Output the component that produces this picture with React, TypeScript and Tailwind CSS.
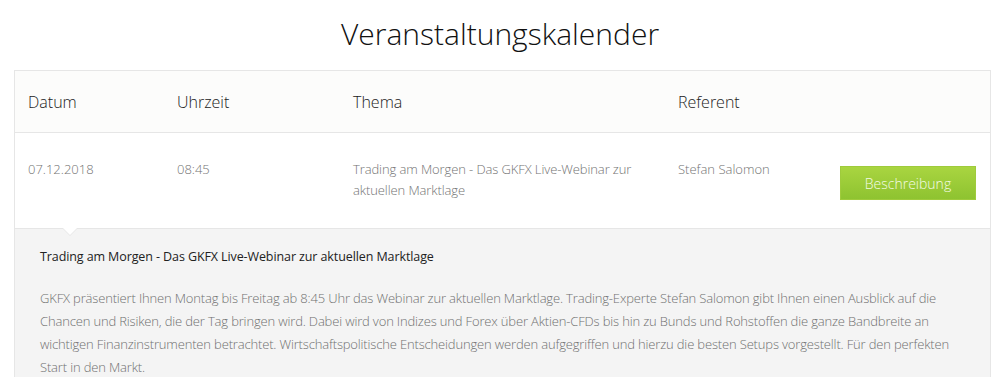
export default function App() {
  return (
    <div className="w-[1000px] h-[377px] overflow-hidden bg-white" style={{ fontFamily: '"Open Sans", "Noto Sans", sans-serif' }}>
      <h1 className="pt-[14px] h-[70px] text-center text-[30px] leading-[40px] font-light text-[#111]">Veranstaltungskalender</h1>
      <div className="mx-[14px] w-[977px] border border-[#e6e6e6] border-b-0">
        <div className="flex h-[62px] items-center bg-[#fcfcfb] border-b border-[#e6e6e6] text-[16px] font-light text-[#222]">
          <div className="w-[162px] pl-[13px]">Datum</div>
          <div className="w-[176px]">Uhrzeit</div>
          <div className="w-[325px]">Thema</div>
          <div>Referent</div>
        </div>
        <div className="relative flex h-[96px] bg-white pt-[26px] text-[13px] leading-[21px] font-light text-[#737373] border-b border-[#e6e6e6]">
          <div className="w-[162px] pl-[13px]">07.12.2018</div>
          <div className="w-[176px]">08:45</div>
          <div className="w-[325px] pr-[20px] tracking-[-0.1px]">Trading am Morgen - Das GKFX Live-Webinar zur aktuellen Marktlage</div>
          <div className="w-[162px]">Stefan Salomon</div>
          <div className="pt-[7px]">
            <button className="w-[136px] h-[34px] border border-[#9fcb3c] bg-gradient-to-b from-[#a9d540] to-[#8ec330] text-[#f4fbe6] text-[14px] font-light">Beschreibung</button>
          </div>
          <div className="absolute left-[47px] bottom-[-8px] w-0 h-0 border-l-[8px] border-r-[8px] border-t-[8px] border-l-transparent border-r-transparent border-t-[#e6e6e6]" />
          <div className="absolute left-[48px] bottom-[-7px] w-0 h-0 border-l-[7px] border-r-[7px] border-t-[7px] border-l-transparent border-r-transparent border-t-white" />
        </div>
        <div className="bg-[#f4f4f4] px-[25px] pt-[18px] pb-[20px]">
          <div className="text-[12.5px] leading-[20px] text-[#222] font-normal tracking-[-0.1px]">Trading am Morgen - Das GKFX Live-Webinar zur aktuellen Marktlage</div>
          <p className="mt-[20px] text-[13px] leading-[23px] font-light text-[#707070] tracking-[-0.16px]">
            GKFX präsentiert Ihnen Montag bis Freitag ab 8:45 Uhr das Webinar zur aktuellen Marktlage. Trading-Experte Stefan Salomon gibt Ihnen einen Ausblick auf die Chancen und Risiken, die der Tag bringen wird. Dabei wird von Indizes und Forex über Aktien-CFDs bis hin zu Bunds und Rohstoffen die ganze Bandbreite an wichtigen Finanzinstrumenten betrachtet. Wirtschaftspolitische Entscheidungen werden aufgegriffen und hierzu die besten Setups vorgestellt. Für den perfekten Start in den Markt.
          </p>
        </div>
      </div>
    </div>
  );
}
